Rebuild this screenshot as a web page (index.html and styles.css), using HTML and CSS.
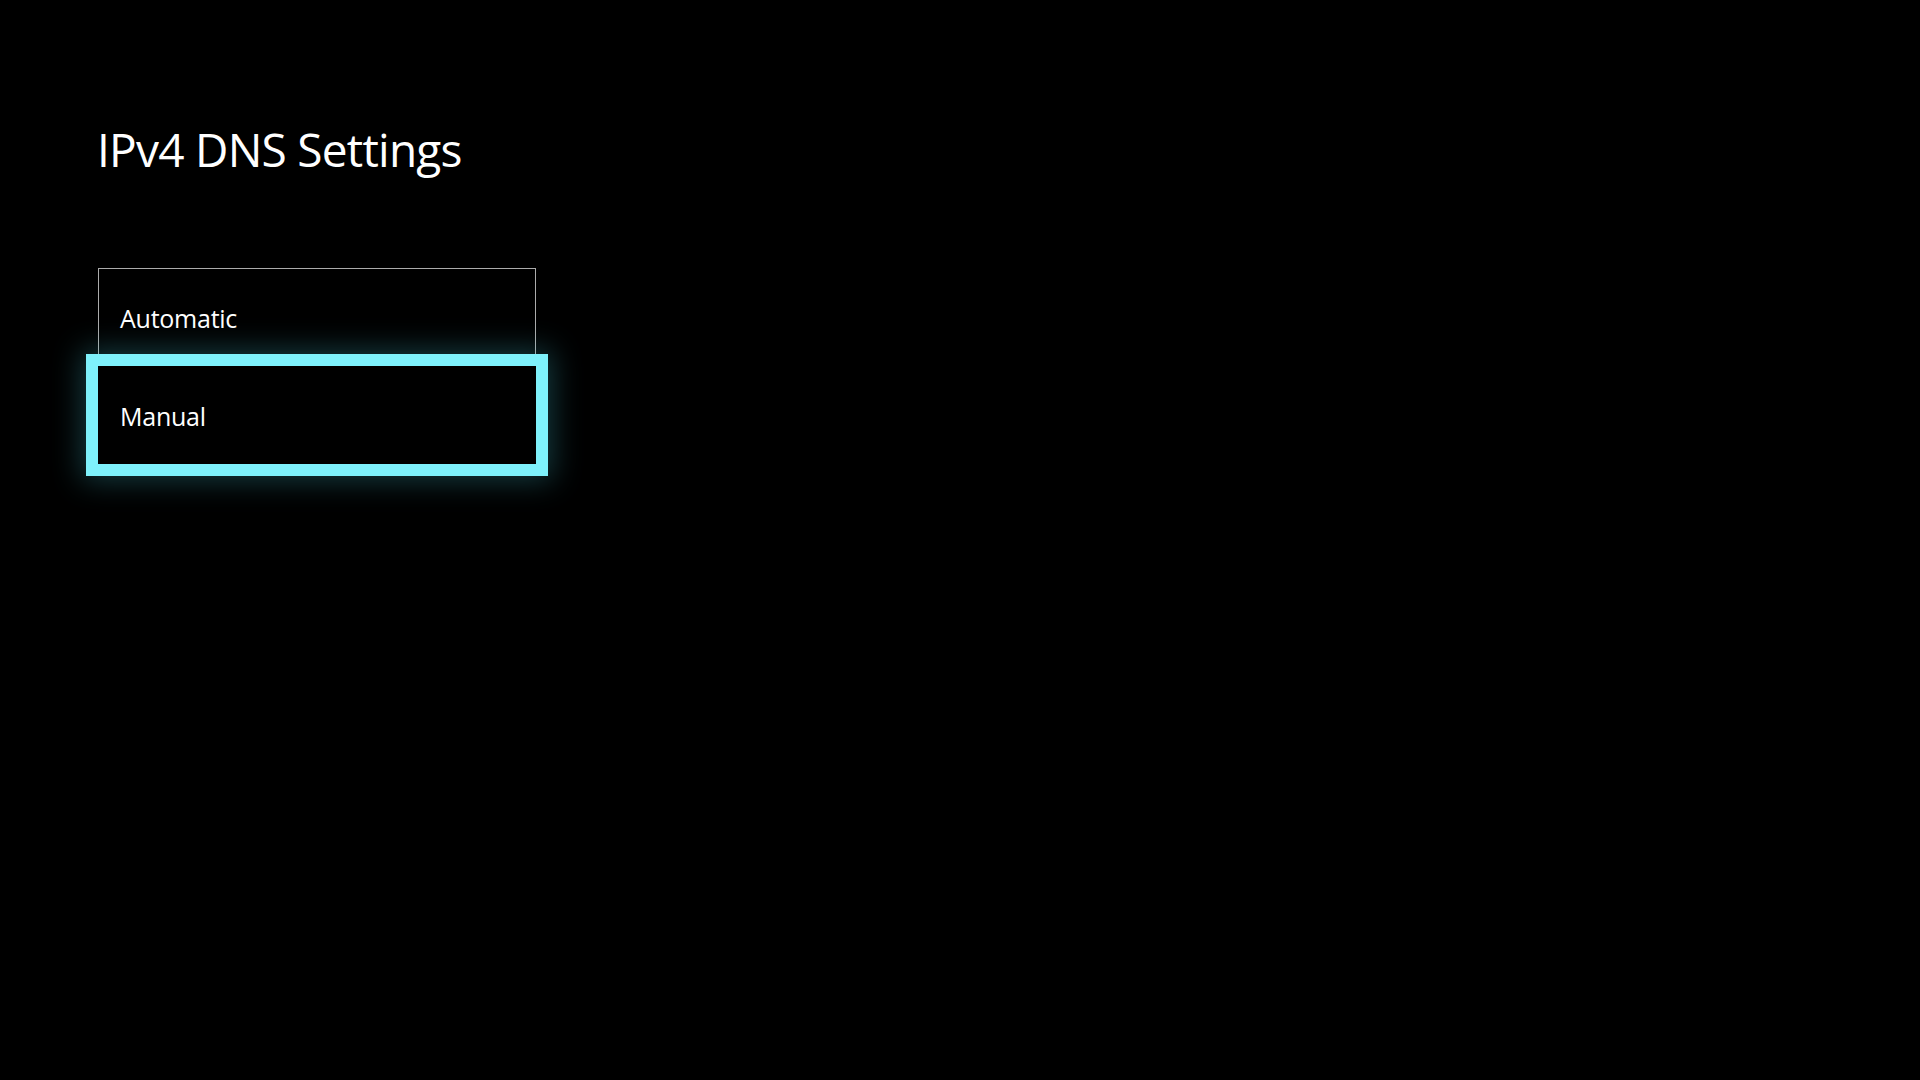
FILE: index.html
```html
<!DOCTYPE html>
<html lang="en">
<head>
<meta charset="utf-8">
<title>IPv4 DNS Settings</title>
<link rel="stylesheet" href="styles.css">
</head>
<body>
<main class="page">
  <h1 class="title">IPv4 DNS Settings</h1>
  <div class="options">
    <div class="option option-plain">Automatic</div>
    <div class="option option-focused">Manual</div>
  </div>
</main>
</body>
</html>
```
FILE: styles.css
```css
html, body {
  margin: 0;
  padding: 0;
  background: #000;
}
body {
  width: 1920px;
  height: 1080px;
  overflow: hidden;
  font-family: "Open Sans", "Noto Sans", "DejaVu Sans", sans-serif;
  color: #fff;
}
.page {
  padding: 126px 0 0 98px;
}
.title {
  margin: 0 0 0 -1px;
  font-size: 46px;
  line-height: 46px;
  font-weight: 400;
  letter-spacing: -0.75px;
}
.options {
  margin-top: 96px;
  display: flex;
  flex-direction: column;
  width: 438px;
}
.option {
  box-sizing: border-box;
  height: 98px;
  display: flex;
  align-items: center;
  padding-left: 21px;
  font-size: 25px;
  letter-spacing: -0.25px;
}
.option-plain {
  border: 1px solid #ababab;
  border-bottom: none;
}
.option-focused {
  position: relative;
  z-index: 1;
  padding-left: 22px;
  padding-top: 2px;
  background: #000;
  box-shadow: 0 0 0 12px #7ef1fb, 0 0 28px 16px rgba(70, 200, 215, 0.3);
}
```
